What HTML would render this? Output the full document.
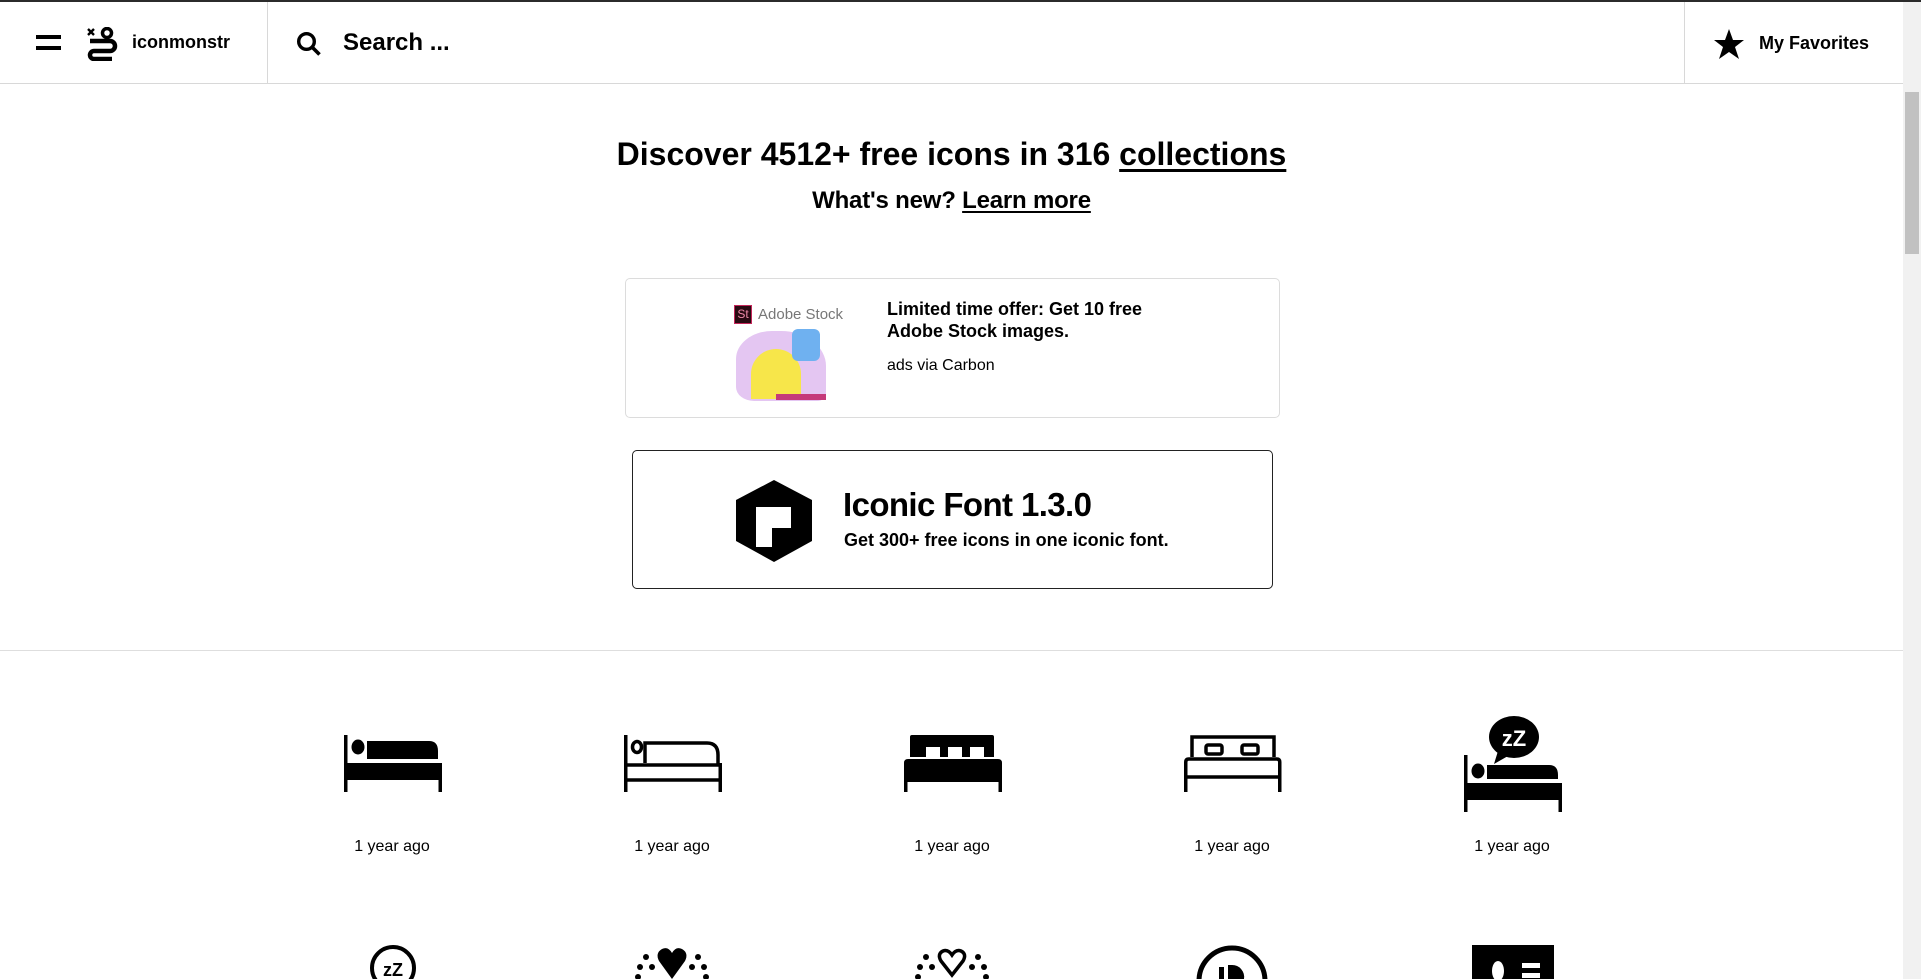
<!DOCTYPE html>
<html><head><meta charset="utf-8">
<style>
*{margin:0;padding:0;box-sizing:border-box}
html,body{width:1921px;height:979px;overflow:hidden;background:#fff;font-family:"Liberation Sans",Arial,sans-serif;color:#000}
.topbar{position:absolute;left:0;top:0;width:1921px;height:2px;background:#2b2b2b}
.header{position:absolute;left:0;top:2px;width:1903px;height:82px;border-bottom:1px solid #d8d8d8;background:#fff}
.sep{position:absolute;top:0;width:1px;height:82px;background:#d8d8d8}
.scroll{position:absolute;left:1903px;top:2px;width:18px;height:977px;background:#f1f1f1}
.thumb{position:absolute;left:1905px;top:92px;width:14px;height:162px;background:#c1c1c1}
.b{font-weight:bold}
.abs{position:absolute}
.ad{position:absolute;left:625px;top:278px;width:655px;height:140px;border:1px solid #dcdcdc;border-radius:5px}
.ic{position:absolute;left:632px;top:450px;width:641px;height:139px;border:1px solid #222;border-radius:5px}
.hr{position:absolute;left:0;top:650px;width:1903px;height:1px;background:#dedede}
.cap{position:absolute;width:200px;text-align:center;font-size:16px;top:838px}
</style></head><body>
<div class="topbar"></div>
<div class="header">
  <div class="abs" style="left:36px;top:33px;width:25px;height:4px;background:#000"></div>
  <div class="abs" style="left:36px;top:44px;width:25px;height:4px;background:#000"></div>
  <svg class="abs" style="left:86px;top:25px" width="34" height="34" viewBox="0 0 34 34">
    <path d="M2 2l6 6M8 2l-6 6" stroke="#000" stroke-width="2.4"/>
    <circle cx="21" cy="6" r="4.5" fill="none" stroke="#000" stroke-width="3.5"/>
    <path d="M4 14h20a5 5 0 0 1 0 10h-16a4 4 0 0 0 0 8h18" fill="none" stroke="#000" stroke-width="4.5"/>
  </svg>
  <div class="abs b" style="left:132px;top:30px;font-size:18px">iconmonstr</div>
  <div class="sep" style="left:267px"></div>
  <svg class="abs" style="left:296px;top:29px" width="26" height="26" viewBox="0 0 26 26"><circle cx="10.5" cy="10.5" r="7.8" fill="none" stroke="#000" stroke-width="3.4"/><path d="M16 16l7.5 7.5" stroke="#000" stroke-width="3.6"/></svg>
  <div class="abs b" style="left:343px;top:27px;font-size:24px">Search ...</div>
  <div class="sep" style="left:1684px"></div>
  <svg class="abs" style="left:1713px;top:26px" width="32" height="32" viewBox="0 0 32 32"><path d="M16 1l4 11h11l-9 7 4 12-10-7-10 7 4-12-9-7h11z" fill="#000"/></svg>
  <div class="abs b" style="left:1759px;top:31px;font-size:18px">My Favorites</div>
</div>
<div class="scroll"></div><div class="thumb"></div>

<div class="abs b" style="left:0;width:1903px;text-align:center;top:136px;font-size:32px">Discover 4512+ free icons in 316 <span style="text-decoration:underline;text-underline-offset:4px">collections</span></div>
<div class="abs b" style="left:0;width:1903px;text-align:center;top:187px;font-size:24px;letter-spacing:-0.2px">What's new? <span style="text-decoration:underline;text-underline-offset:3px">Learn more</span></div>

<div class="ad">
  <div class="abs" style="left:108px;top:26px;width:18px;height:19px;background:#2a0a12;border:1px solid #c4265a;color:#f08aa8;font-size:12px;text-align:center;line-height:17px">St</div>
  <div class="abs" style="left:132px;top:27px;font-size:15px;color:#777">Adobe Stock</div>
  <div class="abs" style="left:110px;top:52px;width:90px;height:70px;border-radius:40% 50% 10% 20%;background:#e4c6f2"></div>
  <div class="abs" style="left:125px;top:70px;width:50px;height:50px;border-radius:50% 50% 0 0;background:#f7e64a"></div>
  <div class="abs" style="left:166px;top:50px;width:28px;height:32px;border-radius:6px;background:#6fb1f0"></div>
  <div class="abs" style="left:150px;top:115px;width:50px;height:6px;background:#c53a7a"></div>
  <div class="abs b" style="left:261px;top:19px;font-size:18px;line-height:22px">Limited time offer: Get 10 free<br>Adobe Stock images.</div>
  <div class="abs" style="left:261px;top:78px;font-size:16px">ads via Carbon</div>
</div>

<div class="ic">
  <svg class="abs" style="left:102px;top:29px" width="78" height="82" viewBox="0 0 78 82"><path d="M39 0l38 20v41l-38 21-38-21v-41z" fill="#000"/><path d="M21 27h35v21h-19v19h-16z" fill="#fff"/></svg>
  <div class="abs b" style="left:210px;top:35px;font-size:33px;letter-spacing:-0.6px">Iconic Font 1.3.0</div>
  <div class="abs b" style="left:211px;top:79px;font-size:18px">Get 300+ free icons in one iconic font.</div>
</div>

<div class="hr"></div>

<svg class="abs" style="left:344px;top:735px" width="98" height="57" viewBox="0 0 98 57">
  <rect x="0" y="0" width="3.5" height="57"/><rect x="0" y="28" width="98" height="17"/><rect x="94.5" y="28" width="3.5" height="29"/>
  <ellipse cx="14" cy="12" rx="6.5" ry="7.5"/><path d="M23 6h62q9 0 9 10v8h-71z"/>
</svg>
<svg class="abs" style="left:624px;top:735px" width="98" height="57" viewBox="0 0 98 57" fill="none" stroke="#000" stroke-width="3.5">
  <path d="M1.75 0v57M96.25 28v29M1.75 30h94.5M1.75 45h94.5"/>
  <ellipse cx="13" cy="12" rx="4.5" ry="5.5"/><path d="M21 28v-20h62q11 0 11 12v10"/>
</svg>
<svg class="abs" style="left:904px;top:735px" width="98" height="57" viewBox="0 0 98 57">
  <path d="M6 22v-20q0-2 2-2h80q2 0 2 2v20h-10v-10h-14v10h-8v-10h-14v10h-8v-10h-14v10z"/>
  <path d="M0 28q0-4 4-4h90q4 0 4 4v19h-98z"/><rect x="0" y="45" width="3.5" height="12"/><rect x="94.5" y="45" width="3.5" height="12"/>
</svg>
<svg class="abs" style="left:1184px;top:735px" width="98" height="57" viewBox="0 0 98 57" fill="none" stroke="#000" stroke-width="3.5">
  <path d="M8 22v-20h82v20"/><rect x="22" y="10" width="16" height="9" rx="2"/><rect x="58" y="10" width="16" height="9" rx="2"/>
  <path d="M1.75 57v-30q0-3 3-3h88q3 0 3 3v30M1.75 42h94.5"/>
</svg>
<svg class="abs" style="left:1464px;top:715px" width="98" height="97" viewBox="0 0 98 97">
  <ellipse cx="50" cy="22" rx="25" ry="21"/><path d="M34 36l-4 13 14-8z"/>
  <text x="50" y="31" font-family="Liberation Sans" font-weight="bold" font-size="22" fill="#fff" text-anchor="middle">zZ</text>
  <rect x="0" y="40" width="3.5" height="57"/><rect x="0" y="68" width="98" height="17"/><rect x="94.5" y="68" width="3.5" height="29"/>
  <ellipse cx="14" cy="56" rx="6.5" ry="7.5"/><path d="M23 50h62q9 0 9 10v4h-71z"/>
</svg>

<div class="cap" style="left:292px">1 year ago</div>
<div class="cap" style="left:572px">1 year ago</div>
<div class="cap" style="left:852px">1 year ago</div>
<div class="cap" style="left:1132px">1 year ago</div>
<div class="cap" style="left:1412px">1 year ago</div>

<svg class="abs" style="left:368px;top:943px" width="50" height="36" viewBox="0 0 50 36"><circle cx="25" cy="25" r="21" fill="none" stroke="#000" stroke-width="4"/><text x="25" y="33" font-family="Liberation Sans" font-weight="bold" font-size="18" text-anchor="middle">zZ</text></svg>
<svg class="abs" style="left:630px;top:943px" width="84" height="36" viewBox="0 0 84 36"><path d="M42 36l-13-18q-4-8 3-12q6-3 10 4q4-7 10-4q7 4 3 12z"/><circle cx="16" cy="14" r="3"/><circle cx="10" cy="24" r="3"/><circle cx="8" cy="34" r="3"/><circle cx="68" cy="14" r="3"/><circle cx="74" cy="24" r="3"/><circle cx="76" cy="34" r="3"/><circle cx="22" cy="24" r="3"/><circle cx="62" cy="24" r="3"/></svg>
<svg class="abs" style="left:910px;top:943px" width="84" height="36" viewBox="0 0 84 36"><path d="M42 32l-11-14q-4-7 2-10q5-2 9 4q4-6 9-4q6 3 2 10z" fill="none" stroke="#000" stroke-width="3.5"/><circle cx="16" cy="14" r="3"/><circle cx="10" cy="24" r="3"/><circle cx="8" cy="34" r="3"/><circle cx="68" cy="14" r="3"/><circle cx="74" cy="24" r="3"/><circle cx="76" cy="34" r="3"/><circle cx="22" cy="24" r="3"/><circle cx="62" cy="24" r="3"/></svg>
<svg class="abs" style="left:1194px;top:943px" width="76" height="36" viewBox="0 0 76 36"><circle cx="38" cy="38" r="33" fill="none" stroke="#000" stroke-width="5"/><rect x="25" y="24" width="5" height="12"/><path d="M34 22h4a12 12 0 0 1 12 14h-16z"/></svg>
<svg class="abs" style="left:1472px;top:945px" width="82" height="34" viewBox="0 0 82 34"><rect width="82" height="34"/><ellipse cx="26" cy="26" rx="6" ry="10" fill="#fff"/><rect x="50" y="18" width="18" height="5" fill="#fff"/><rect x="50" y="28" width="18" height="5" fill="#fff"/></svg>
</body></html>
